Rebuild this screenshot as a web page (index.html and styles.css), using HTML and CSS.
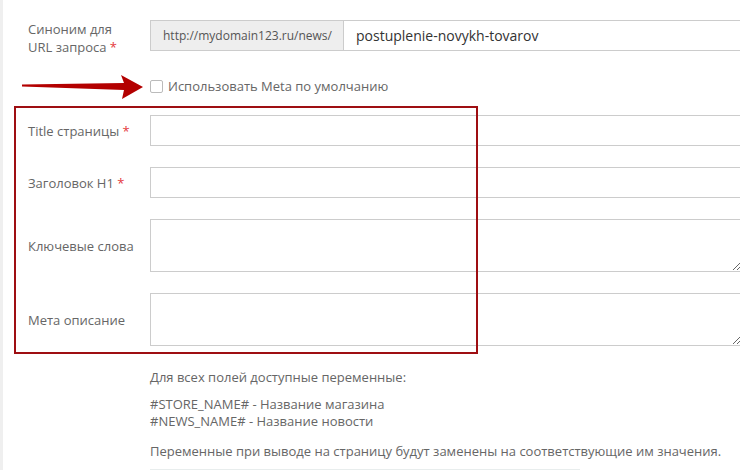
FILE: index.html
```html
<!DOCTYPE html>
<html lang="ru">
<head>
<meta charset="utf-8">
<title>SEO</title>
<link rel="stylesheet" href="styles.css">
</head>
<body>
<div class="page">
  <div class="form">
    <div class="row row-url">
      <label class="label label-top">Синоним для<br>URL запроса <span class="req">*</span></label>
      <div class="group">
        <span class="addon">http://mydomain123.ru/news/</span>
        <input class="input input-url" type="text" value="postuplenie-novykh-tovarov">
      </div>
    </div>
    <div class="row row-check">
      <div></div>
      <label class="check"><span class="box"></span>Использовать Meta по умолчанию</label>
    </div>
    <div class="row">
      <label class="label">Title страницы <span class="req">*</span></label>
      <input class="input" type="text">
    </div>
    <div class="row">
      <label class="label">Заголовок H1 <span class="req">*</span></label>
      <input class="input" type="text">
    </div>
    <div class="row">
      <label class="label">Ключевые слова</label>
      <textarea class="input area"></textarea>
    </div>
    <div class="row">
      <label class="label">Мета описание</label>
      <textarea class="input area"></textarea>
    </div>
    <div class="help">
      <p class="help-title">Для всех полей доступные переменные:</p>
      <p class="help-vars">#STORE_NAME# - Название магазина<br>#NEWS_NAME# - Название новости</p>
      <p class="help-note">Переменные при выводе на страницу будут заменены на соответствующие им значения.</p>
      <div class="next"></div>
    </div>
  </div>

  <div class="highlight"></div>
  <svg class="arrow" width="130" height="30" viewBox="0 0 130 30">
    <polygon points="2,11.5 104,10 101,2 123,14 102,26 104,17 2,13.5" fill="#b30000"/>
  </svg>
</div>
</body>
</html>
```

FILE: styles.css
```css
* { box-sizing: border-box; }
html, body { margin: 0; padding: 0; }
body {
  width: 740px;
  height: 470px;
  overflow: hidden;
  background: #fff;
  font-family: "Open Sans", "Noto Sans", sans-serif;
  font-size: 13px;
  color: #666;
}
.page {
  position: relative;
  height: 470px;
  border-left: 3px solid #efefef;
}
.form {
  padding: 20px 0 0 25px;
}
.row {
  display: grid;
  grid-template-columns: 122px 592px;
  align-items: center;
  margin-bottom: 21px;
}
.row-url {
  grid-template-rows: 31px;
  height: 31px;
}
.row-check {
  margin-top: 24px;
  margin-bottom: 18px;
  height: 22px;
}
.label {
  line-height: 18px;
  color: #666;
}
.label-top {
  align-self: start;
}
.req { color: #e4393c; }
.group {
  display: flex;
  height: 31px;
}
.addon {
  width: 194px;
  flex: none;
  background: #eee;
  border: 1px solid #ccc;
  color: #555;
  font-size: 12px;
  line-height: 29px;
  padding-left: 12px;
}
.input {
  display: block;
  width: 592px;
  height: 31px;
  border: 1px solid #ccc;
  background: #fff;
  font-family: "Open Sans", "Noto Sans", sans-serif;
  font-size: 14px;
  color: #333;
  padding: 0 12px;
  margin: 0;
  outline: none;
}
.input-url {
  flex: 1;
  width: auto;
  border-left: none;
  font-size: 14px;
}
.area {
  height: 53px;
  resize: vertical;
}
.check {
  display: flex;
  align-items: center;
  color: #666;
  font-size: 13px;
  line-height: 18px;
}
.box {
  width: 13px;
  height: 13px;
  border: 1px solid #bbb;
  border-radius: 2px;
  margin-right: 5px;
  background: #fff;
}
.help {
  margin-left: 122px;
  padding-top: 2px;
  color: #666;
  font-size: 13px;
  line-height: 17px;
}
.help p { margin: 0; }
.help-title { margin-bottom: 10px !important; }
.help-vars { margin-bottom: 13px !important; }
.next {
  margin-top: 9px;
  width: 430px;
  border-top: 2px solid #e8eded;
}
.highlight {
  position: absolute;
  left: 11px;
  top: 106px;
  width: 464px;
  height: 248px;
  border: 2px solid #9e0e12;
}
.arrow {
  position: absolute;
  left: 17px;
  top: 73px;
}
```
